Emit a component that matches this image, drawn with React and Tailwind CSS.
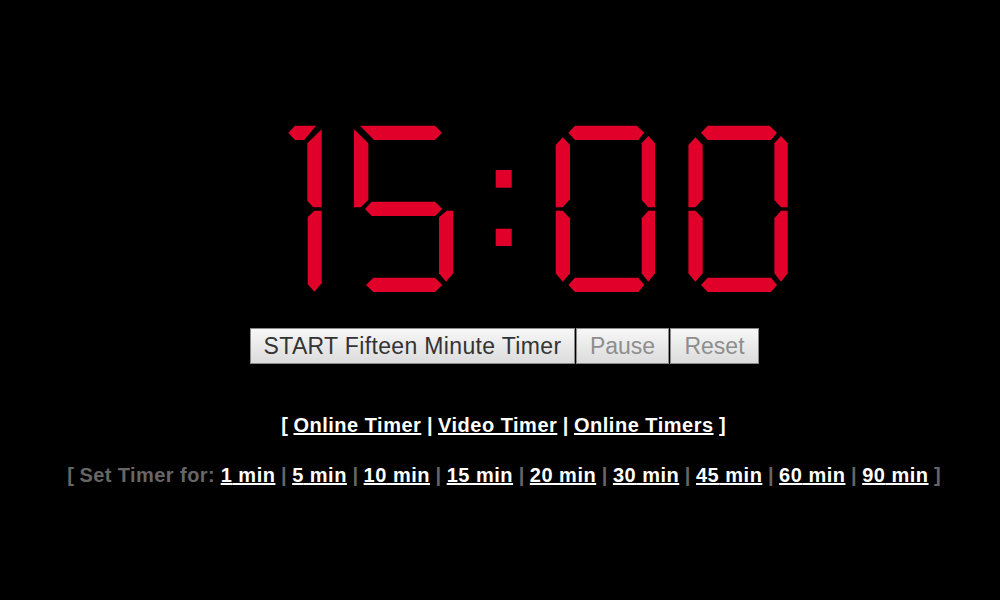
const RED = '#e0002a';

const oneSegments = [
  '288.3,132.7 295,125.7 316,125.7 304.3,140 295,140',
  '321.7,129.3 321.7,207.3 313.3,207.3 307.3,200.7 307.3,143.3',
  '321.7,210.7 321.7,283.3 314.3,291.7 307.7,284 307.7,217.3 314.3,210.7',
];

const fiveSegments = [
  '354,129.3 368.3,143.3 368.3,200 360.7,207.3 354,207.3',
  '360,125.7 435,125.7 442,132.7 435,140 374,140',
  '365,209 371.7,201.7 435,201.7 442.3,209 435,216 371.7,216',
  '453.3,210.7 453.3,273.3 446,281.7 439,273.3 439,217.3 446.7,210.7',
  '366,285 373.3,277.7 435,277.7 442.3,285 435,292 373.3,292',
];

const zeroSegments = [
  '568.3,132.7 575,125.7 636.7,125.7 644.3,132.7 638.3,140 575,140',
  '555.7,145 562.7,137.3 570,145 570,199.3 562.7,207.3 555.7,207.3',
  '641.7,143.3 648.3,136 655,143.3 655,207.3 648.3,207.3 641.7,200',
  '555.7,210.7 562.7,210.7 570,218.3 570,273.3 562.7,281.7 555.7,273.3',
  '655,210.7 655,273.3 648.3,281.7 641.7,273.3 641.7,218.3 648.3,210.7',
  '568.3,285 575,277.7 638.3,277.7 644.3,285 638.3,292 575,292',
];

const minutes = [1, 5, 10, 15, 20, 30, 45, 60, 90];

const Clock = () => (
  <svg width="1000" height="180" viewBox="0 120 1000 180" className="block">
    <g fill={RED}>
      {oneSegments.map((p) => <polygon key={p} points={p} />)}
      {fiveSegments.map((p) => <polygon key={p} points={p} />)}
      <rect x="495.7" y="170" width="16" height="17.7" />
      <rect x="495.7" y="228.7" width="16" height="17.3" />
      {zeroSegments.map((p) => <polygon key={p} points={p} />)}
      <g transform="translate(132.7 0)">
        {zeroSegments.map((p) => <polygon key={p} points={p} />)}
      </g>
    </g>
  </svg>
);

const TimerButton = ({ className, children }) => (
  <button className={`h-[36px] border border-[#8a8a8a] bg-gradient-to-b from-[#f7f7f7] to-[#dcdcdc] text-[23px] leading-none ${className}`}>
    {children}
  </button>
);

const TimerLink = ({ children }) => (
  <a className="text-white underline tracking-[0.5px]">{children}</a>
);

const App = () => {
  return (
    <div className="h-[600px] w-[1000px] overflow-hidden bg-black pt-[120px] font-['Liberation_Sans',Arial,sans-serif]">
      <Clock />
      <div className="mt-[28px] flex justify-center pl-[9px] gap-px">
        <TimerButton className="w-[325px] text-[#333333] tracking-[0.35px]">START Fifteen Minute Timer</TimerButton>
        <TimerButton className="w-[93px] text-[#8e8e8e]">Pause</TimerButton>
        <TimerButton className="w-[89px] text-[#8e8e8e]">Reset</TimerButton>
      </div>
      <div className="mt-[49px] pl-[7px] text-center text-[20px] leading-[24px] font-bold text-white">
        [ <TimerLink>Online Timer</TimerLink> | <TimerLink>Video Timer</TimerLink> | <TimerLink>Online Timers</TimerLink> ]
      </div>
      <div className="mt-[26px] pl-[8px] text-center text-[20px] leading-[24px] font-bold text-[#666666]">
        [ <span className="tracking-[0.43px]">Set Timer for:</span>{' '}
        {minutes.map((m, i) => (
          <span key={m}>
            <TimerLink>{m} min</TimerLink>
            {i < minutes.length - 1 ? ' | ' : ' '}
          </span>
        ))}
        ]
      </div>
    </div>
  );
};

export default App;
